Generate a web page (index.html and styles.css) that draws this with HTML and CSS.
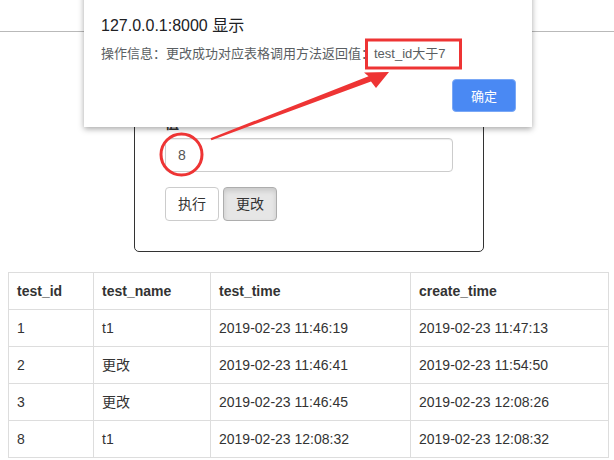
FILE: index.html
```html
<!DOCTYPE html>
<html lang="zh">
<head>
<meta charset="utf-8">
<title>test</title>
<link rel="stylesheet" href="styles.css">
</head>
<body>
<div class="topbar"></div>

<div class="panel">
  <label class="field-label">值</label>
  <input class="field-input" type="text" value="8">
  <div class="actions">
    <button class="btn">执行</button>
    <button class="btn btn-active">更改</button>
  </div>
</div>

<table class="data">
  <colgroup>
    <col class="c1"><col class="c2"><col class="c3"><col class="c4">
  </colgroup>
  <thead>
    <tr><th>test_id</th><th>test_name</th><th>test_time</th><th>create_time</th></tr>
  </thead>
  <tbody>
    <tr><td>1</td><td>t1</td><td>2019-02-23 11:46:19</td><td>2019-02-23 11:47:13</td></tr>
    <tr><td>2</td><td>更改</td><td>2019-02-23 11:46:41</td><td>2019-02-23 11:54:50</td></tr>
    <tr><td>3</td><td>更改</td><td>2019-02-23 11:46:45</td><td>2019-02-23 12:08:26</td></tr>
    <tr><td>8</td><td>t1</td><td>2019-02-23 12:08:32</td><td>2019-02-23 12:08:32</td></tr>
  </tbody>
</table>

<div class="dialog">
  <div class="dialog-title">127.0.0.1:8000 显示</div>
  <div class="dialog-msg">操作信息：更改成功对应表格调用方法返回值：test_id大于7</div>
  <div class="dialog-foot">
    <button class="dialog-ok">确定</button>
  </div>
</div>

<svg class="marks" width="614" height="460" viewBox="0 0 614 460">
  <rect x="366.5" y="40" width="94" height="28" fill="none" stroke="#ee3434" stroke-width="3"/>
  <circle cx="181.5" cy="154.5" r="20.5" fill="none" stroke="#ee3434" stroke-width="3"/>
  <polygon points="210.5,138.2 368.5,76.2 364,72.5 389,72 376,88 371,81.5 211.5,140.2" fill="#ee3434"/>
</svg>
</body>
</html>
```

FILE: styles.css
```css
* { box-sizing: border-box; }

html, body {
  margin: 0;
  padding: 0;
  background: #fff;
}

body {
  position: relative;
  width: 614px;
  height: 460px;
  overflow: hidden;
  font-family: "Liberation Sans", "Noto Sans CJK SC", sans-serif;
  font-size: 14px;
  line-height: 20px;
  color: #333;
}

.topbar {
  height: 32px;
  border-bottom: 1px solid #b9b9b9;
}

.panel {
  width: 350px;
  margin: 50px 0 0 134px;
  padding: 30px;
  border: 1px solid #333;
  border-radius: 5px;
}

.field-label {
  display: block;
  font-weight: bold;
  margin-bottom: 5px;
}

.field-input {
  display: block;
  width: 100%;
  height: 34px;
  padding: 6px 12px;
  font: inherit;
  color: #555;
  border: 1px solid #ccc;
  border-radius: 4px;
  box-shadow: inset 0 1px 1px rgba(0,0,0,.075);
}

.actions {
  display: flex;
  gap: 4px;
  margin-top: 15px;
}

.btn {
  height: 34px;
  padding: 6px 12px;
  font: inherit;
  color: #333;
  background: #fff;
  border: 1px solid #ccc;
  border-radius: 4px;
}

.btn-active {
  background: #e6e6e6;
  border-color: #adadad;
  box-shadow: inset 0 3px 5px rgba(0,0,0,.125);
}

.data {
  width: 600px;
  margin: 20px 0 0 8px;
  border-collapse: collapse;
  table-layout: fixed;
}

.c1 { width: 85px; }
.c2 { width: 117px; }
.c3 { width: 200px; }
.c4 { width: 198px; }

.data th, .data td {
  padding: 8px;
  border: 1px solid #ddd;
  text-align: left;
  vertical-align: top;
  line-height: 20px;
}

.data th { font-weight: bold; }

.dialog {
  position: absolute;
  left: 84px;
  top: -10px;
  width: 448px;
  height: 137px;
  background: #fff;
  box-shadow: 0 2px 6px rgba(0,0,0,.35);
  padding: 26px 17px 0 17px;
}

.dialog-title {
  font-family: "Liberation Sans", "Noto Sans CJK SC", sans-serif;
  font-size: 16px;
  line-height: 20px;
  color: #202124;
}

.dialog-msg {
  margin-top: 9px;
  font-family: "Liberation Sans", "Noto Sans CJK SC", sans-serif;
  font-size: 13px;
  line-height: 18px;
  color: #5a5e62;
}

.dialog-foot {
  display: flex;
  justify-content: flex-end;
  margin-top: 16px;
}

.dialog-ok {
  width: 64px;
  height: 33px;
  margin-right: -1px;
  background: #4a89f3;
  border: 1px solid #7aa8f6;
  border-radius: 4px;
  color: #fff;
  font-family: "Noto Sans CJK SC", sans-serif;
  font-size: 13px;
}

.marks {
  position: absolute;
  left: 0;
  top: 0;
  pointer-events: none;
}
```
